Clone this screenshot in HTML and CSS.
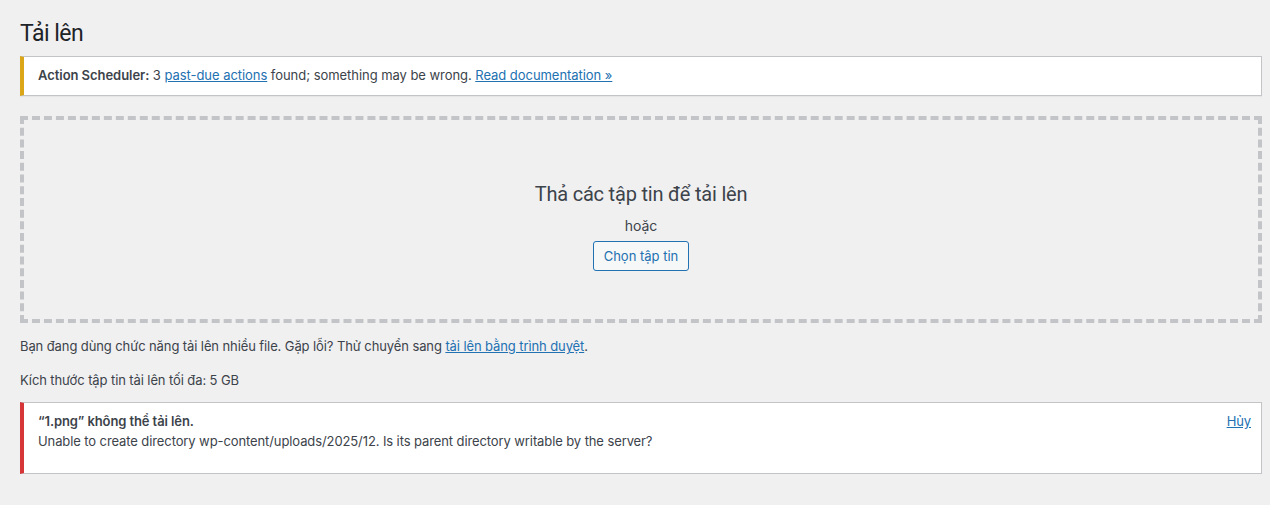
FILE: index.html
```html
<!DOCTYPE html>
<html lang="vi">
<head>
    <meta charset="UTF-8">
    <meta name="viewport" content="width=device-width, initial-scale=1.0">
    <title>Tải lên</title>
    <link rel="stylesheet" href="styles.css">
</head>
<body>
    <div class="wrap">
        <h1>Tải lên</h1>

        <div class="notice notice-warning">
            <p><strong>Action Scheduler:</strong> 3 <a href="#">past-due actions</a> found; something may be wrong. <a href="#">Read documentation »</a></p>
        </div>

        <div class="drag-drop-area">
            <div class="drag-drop-inside">
                <p class="drag-drop-info">Thả các tập tin để tải lên</p>
                <p class="drag-drop-or">hoặc</p>
                <button class="button" type="button">Chọn tập tin</button>
            </div>
        </div>

        <p class="upload-flash-bypass">Bạn đang dùng chức năng tải lên nhiều file. Gặp lỗi? Thử chuyển sang <a href="#">tải lên bằng trình duyệt</a>.</p>
        <p class="max-upload-size">Kích thước tập tin tải lên tối đa: 5 GB</p>

        <div class="media-item error">
            <div class="error-text">
                <strong>“1.png” không thể tải lên.</strong>
                <span>Unable to create directory wp-content/uploads/2025/12. Is its parent directory writable by the server?</span>
            </div>
            <a href="#" class="dismiss">Hủy</a>
        </div>
    </div>
</body>
</html>
```

FILE: styles.css
```css
/* Upload page */
html, body {
    margin: 0;
    padding: 0;
}

body {
    background-color: #f0f0f1;
    color: #3c434a;
    font-family: Inter, Roboto, "Noto Sans", sans-serif;
    font-size: 13px;
    line-height: 1.5;
    letter-spacing: -0.1px;
}

a {
    color: #2271b1;
    text-decoration: underline;
}

.wrap {
    margin: 10px 8px 0 20px;
}

.wrap h1 {
    font-family: Roboto, "Noto Sans", sans-serif;
    font-size: 23px;
    font-weight: 400;
    line-height: 1.3;
    letter-spacing: -0.5px;
    color: #1d2327;
    margin: 0;
    padding: 9px 0 4px;
}

.notice {
    background: #fff;
    border: 1px solid #c3c4c7;
    border-left-width: 4px;
    box-shadow: 0 1px 1px rgba(0, 0, 0, 0.04);
    margin: 3px 0 20px;
    padding: 1px 14px;
}

.notice-warning {
    border-left-color: #dba617;
}

.notice p {
    margin: 6.5px 0;
    padding: 2px 0;
    letter-spacing: -0.05px;
}

.notice strong {
    font-weight: 600;
}

.drag-drop-area {
    border: 4px dashed #c3c4c7;
    height: 199px;
}

.drag-drop-inside {
    display: flex;
    flex-direction: column;
    align-items: center;
    padding-top: 60px;
}

.drag-drop-info {
    font-family: Roboto, "Noto Sans", sans-serif;
    font-size: 20px;
    line-height: 28px;
    letter-spacing: -0.2px;
    margin: 0;
    color: #3c434a;
}

.drag-drop-or {
    font-size: 14px;
    line-height: 20px;
    margin: 8px 0 5px;
    color: #3c434a;
}

.button {
    font-family: inherit;
    font-size: 13px;
    line-height: 28px;
    height: 30px;
    padding: 0 10px;
    color: #2271b1;
    border: 1px solid #2271b1;
    background: #f6f7f7;
    border-radius: 3px;
    cursor: pointer;
}

.upload-flash-bypass {
    margin: 14px 0;
}

.max-upload-size {
    margin: 14px 0 12px;
}

.media-item.error {
    display: flex;
    justify-content: space-between;
    align-items: flex-start;
    background: #fff;
    border: 1px solid #c3c4c7;
    border-left: 4px solid #d63638;
    box-shadow: 0 1px 1px rgba(0, 0, 0, 0.04);
    padding: 9px 10px 22px 14px;
}

.error-text {
    display: flex;
    flex-direction: column;
}

.error-text strong {
    font-weight: 600;
    color: #3c434a;
}

.dismiss {
    font-size: 13px;
}
```
